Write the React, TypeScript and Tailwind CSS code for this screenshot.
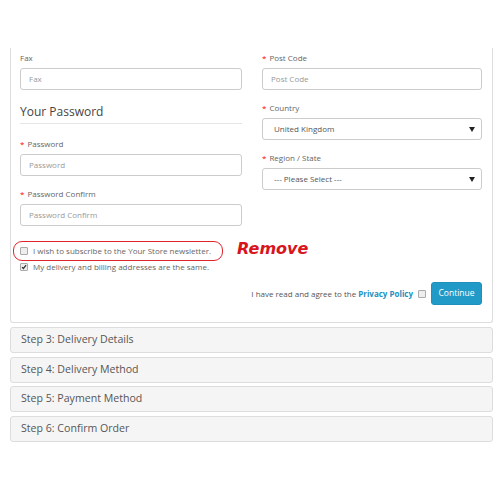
import React from "react";

const font = { fontFamily: '"Open Sans", "Liberation Sans", sans-serif' };

function Label({ text, req }: { text: string; req?: boolean }) {
  return (
    <div className="h-[17px] flex items-center text-[8px] text-[#666]">
      {req && <span className="text-[#f00] mr-[3px]">*</span>}
      {text}
    </div>
  );
}

function Input({ ph }: { ph: string }) {
  return (
    <div className="mt-[2px] h-[22px] border border-[#ccc] rounded-[3px] bg-white flex items-center px-[8px] text-[8px] text-[#999]">
      {ph}
    </div>
  );
}

function Select({ value }: { value: string }) {
  return (
    <div className="mt-[2px] h-[22px] border border-[#ccc] rounded-[3px] bg-white flex items-center justify-between pl-[11px] pr-[6px] text-[8px] text-[#555]">
      <span>{value}</span>
      <svg width="6" height="5" viewBox="0 0 6 5">
        <path d="M0 0 L6 0 L3 5 Z" fill="#222" />
      </svg>
    </div>
  );
}

function Checkbox({ checked }: { checked?: boolean }) {
  return (
    <div className="w-[8px] h-[8px] shrink-0 border border-[#aaa] rounded-[1px] bg-[#eee] flex items-center justify-center">
      {checked && (
        <svg width="8" height="8" viewBox="0 0 8 8">
          <path d="M1.3 4.2 L3.2 6 L6.8 1.6" stroke="#333" strokeWidth="1.6" fill="none" />
        </svg>
      )}
    </div>
  );
}

function Step({ title }: { title: string }) {
  return (
    <div className="h-[26px] border border-[#ddd] rounded-[3px] bg-[#f5f5f5] flex items-center pl-[10px] text-[10.6px] text-[#555]">
      {title}
    </div>
  );
}

export default function App() {
  return (
    <div className="w-[500px] h-[500px] bg-white overflow-hidden" style={font}>
      <div className="h-[48px]" />
      <div className="ml-[10px] w-[483px] border-x border-b border-[#ddd] rounded-b-[3px] h-[275px] pl-[9px] pr-[10px]">
        <div className="grid grid-cols-[222px_220px] gap-x-[20px] pt-[1px]">
          <div>
            <Label text="Fax" />
            <Input ph="Fax" />
            <div className="mt-[12px] h-[20px] flex items-center text-[12px] text-[#444]">
              Your Password
            </div>
            <div className="mt-[1px] border-t border-[#e5e5e5]" />
            <div className="mt-[11px]">
              <Label text="Password" req />
              <Input ph="Password" />
            </div>
            <div className="mt-[9px]">
              <Label text="Password Confirm" req />
              <Input ph="Password Confirm" />
            </div>
          </div>
          <div>
            <Label text="Post Code" req />
            <Input ph="Post Code" />
            <div className="mt-[9px]">
              <Label text="Country" req />
              <Select value="United Kingdom" />
            </div>
            <div className="mt-[9px]">
              <Label text="Region / State" req />
              <Select value="--- Please Select ---" />
            </div>
          </div>
        </div>
        <div className="mt-[15px] flex items-center -ml-[7px]">
          <div className="w-[210px] h-[20px] border-[1.5px] border-[#e0242c] rounded-[9px] flex items-center pl-[6px] gap-[5px] text-[8px] text-[#666]">
            <Checkbox />
            <span className="whitespace-nowrap">I wish to subscribe to the Your Store newsletter.</span>
          </div>
          <span
            className="ml-[14px] -mt-[4px] text-[16px] font-bold italic text-[#d8141c]"
            style={{ fontFamily: '"DejaVu Sans", sans-serif' }}
          >
            Remove
          </span>
        </div>
        <div className="flex items-center gap-[5px] h-[12px] text-[8px] text-[#666]">
          <Checkbox checked />
          <span className="whitespace-nowrap">My delivery and billing addresses are the same.</span>
        </div>
        <div className="mt-[9px] flex items-center justify-end gap-[5px] text-[8px] text-[#555]">
          <span className="whitespace-nowrap">
            I have read and agree to the{" "}
            <span className="font-bold text-[#2390c0]">Privacy Policy</span>
          </span>
          <Checkbox />
          <div className="w-[51px] h-[23px] rounded-[3px] bg-[#229ac8] border border-[#1f90bb] flex items-center justify-center text-white text-[8.5px]">
            Continue
          </div>
        </div>
      </div>
      <div className="ml-[10px] w-[483px] mt-[4px] flex flex-col gap-[3.5px]">
        <Step title="Step 3: Delivery Details" />
        <Step title="Step 4: Delivery Method" />
        <Step title="Step 5: Payment Method" />
        <Step title="Step 6: Confirm Order" />
      </div>
    </div>
  );
}
